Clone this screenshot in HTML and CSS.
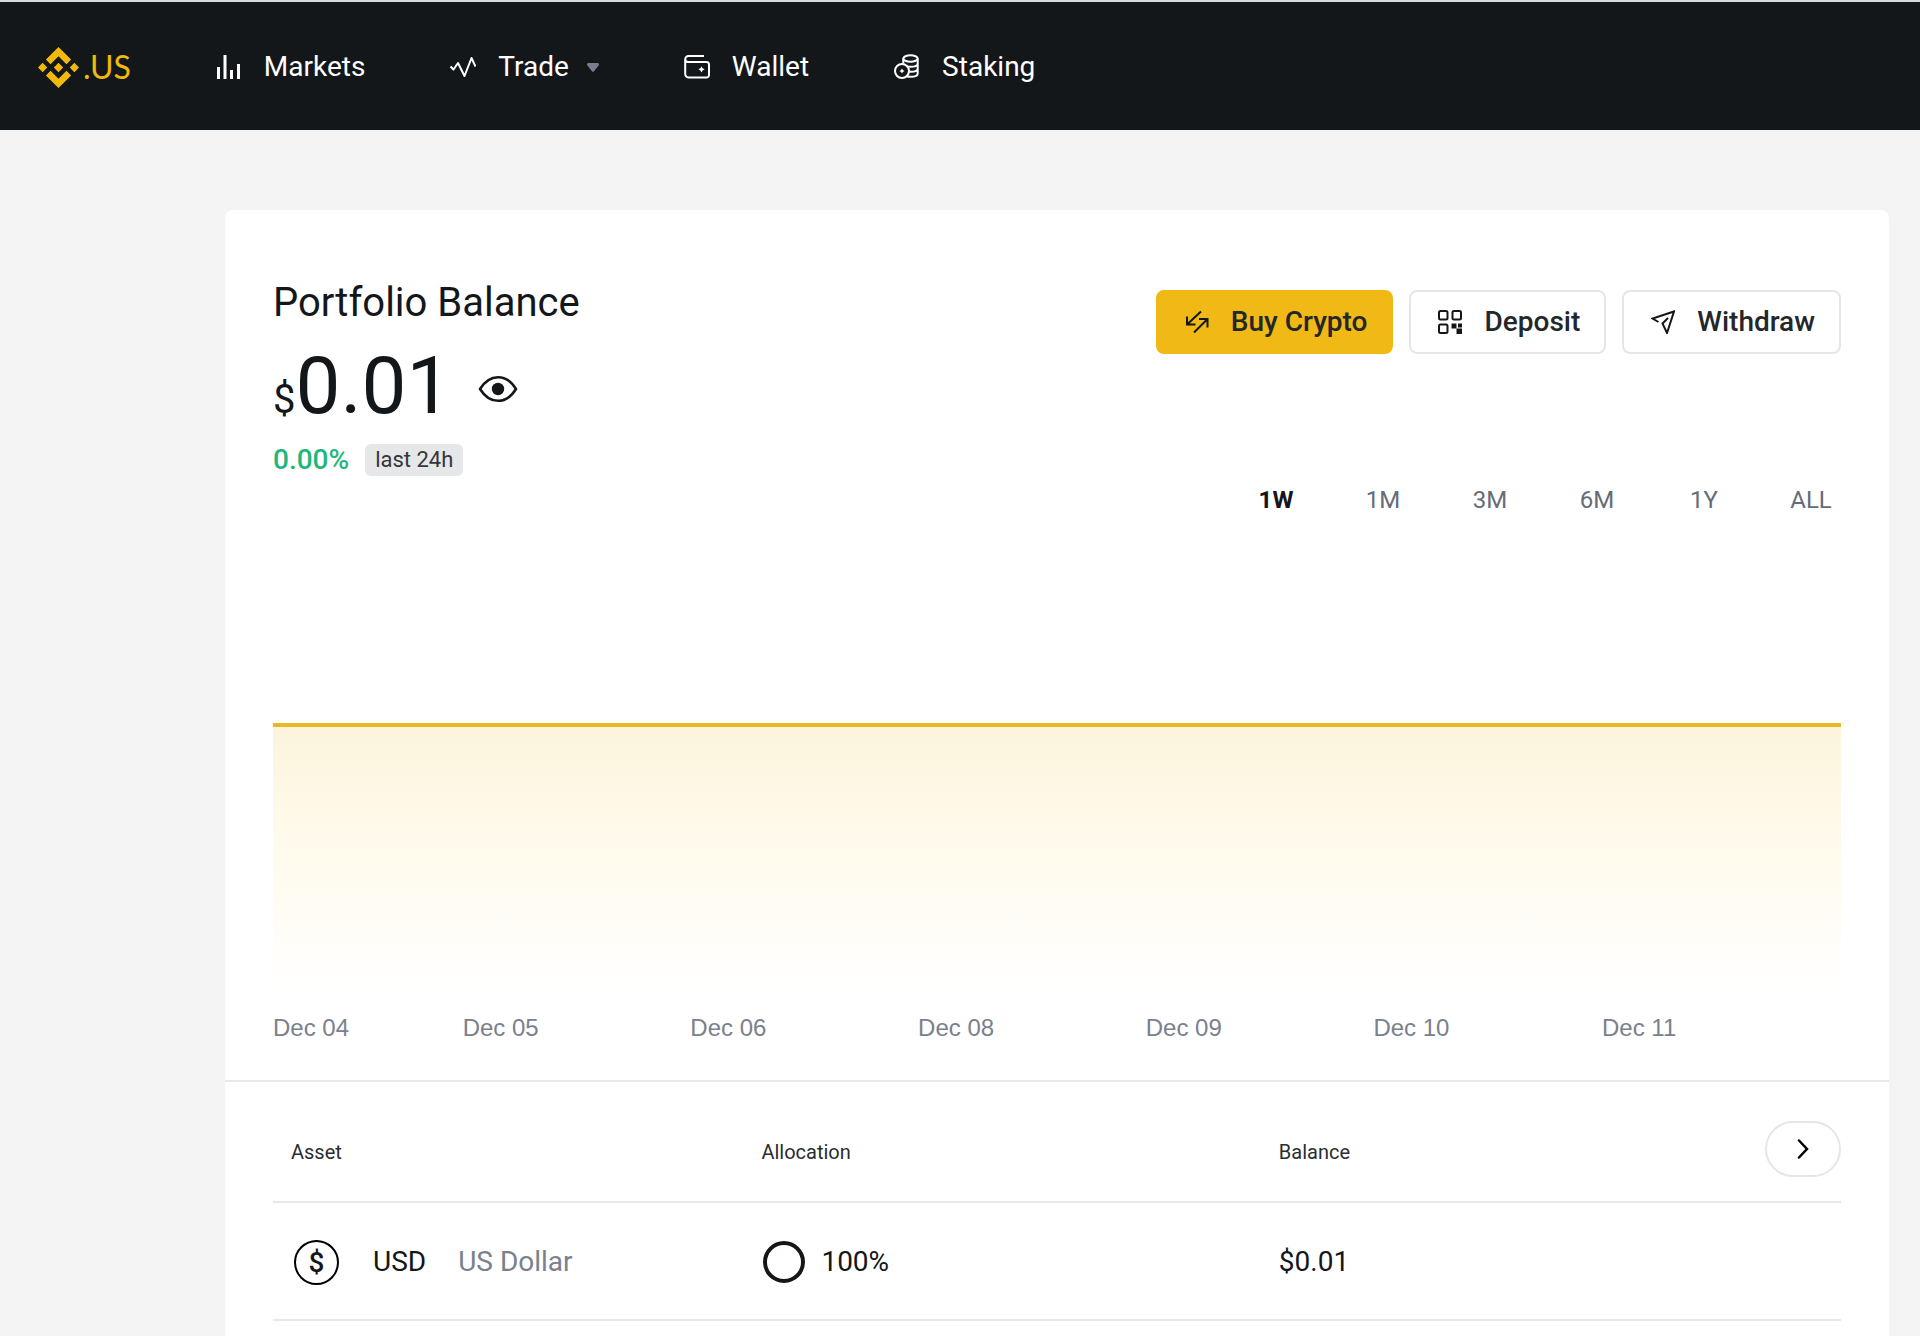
FILE: index.html
```html
<!DOCTYPE html>
<html lang="en">
<head>
  <meta charset="UTF-8" />
  <meta name="viewport" content="width=device-width, initial-scale=1.0" />
  <title>Portfolio</title>
  <link rel="stylesheet" href="styles.css">
</head>
<body>

  <!-- Top navigation -->
  <header class="header">
    <a href="#" class="logo">
      <svg class="logo-mark" viewBox="0 0 126.61 126.61" aria-hidden="true">
        <path d="M38.73 53.2l24.59-24.58 24.6 24.6 14.3-14.31L63.32 0 24.43 38.9zM0 63.31l14.3-14.31 14.31 14.31-14.31 14.3zM38.73 73.41l24.59 24.59 24.6-24.6 14.31 14.29-38.9 38.91-38.91-38.88zM98 63.31l14.3-14.31 14.31 14.3-14.31 14.32zM77.83 63.3L63.32 48.78 48.8 63.3l14.52 14.5z"/>
      </svg>
      <span>.US</span>
    </a>
    <nav class="nav">
      <a href="#" class="nav-link">
        <svg class="nav-icon" viewBox="0 0 26 26" aria-hidden="true">
          <path fill="#fff" d="M1 13h3v12H1zM7.500 1h3v24h-3zM14 16h3v9h-3zM21 10h3v15h-3z"/>
        </svg>
        Markets
      </a>
      <a href="#" class="nav-link">
        <svg class="nav-icon" viewBox="0 0 26 26" aria-hidden="true">
          <path class="line" d="M0.500 12.500L3.500 15.500L8 9L14.500 22L21.500 4L25.500 12.500"/>
        </svg>
        Trade
        <svg class="caret" viewBox="0 0 12 9" aria-hidden="true">
          <path d="M1.500 0h9c1.300 0 1.900 1.500 1.100 2.500L7 8.300c-.5.700-1.500.7-2 0L.4 2.500C-.4 1.500.2 0 1.500 0z"/>
        </svg>
      </a>
      <a href="#" class="nav-link">
        <svg class="nav-icon" viewBox="0 0 26 26" aria-hidden="true">
          <path class="line" d="M20 2H4.500a3.300 3.300 0 0 0-3.300 3.300V20A3.600 3.600 0 0 0 4.800 23.600H22.500a2.500 2.500 0 0 0 2.500-2.500V10.500A2.500 2.500 0 0 0 22.500 8H4.500A3 3 0 0 1 1.200 5.500"/>
          <path fill="#fff" d="M17.500 12.200l1.100 2 2 1.100-2 1.100-1.100 2-1.100-2-2-1.100 2-1.100z"/>
        </svg>
        Wallet
      </a>
      <a href="#" class="nav-link">
        <svg class="nav-icon" viewBox="0 0 26 26" aria-hidden="true">
          <ellipse class="line" cx="16.500" cy="4.500" rx="7.200" ry="3.200"/>
          <path class="line" d="M9.300 4.500V9.500M23.700 4.500V19.500c0 2-3.200 3.300-7.200 3.300-1.500 0-2.800-.2-4-.5M23.700 9.500c0 2-3.200 3.300-7.200 3.300-1.200 0-2.300-.1-3.200-.4M23.700 14.500c0 2-3.200 3.300-7.200 3.300-.7 0-1.300 0-1.900-.1"/>
          <circle class="line" cx="8" cy="17" r="7"/>
          <path fill="#fff" d="M8 14.500l.9 1.600 1.600.9-1.600.9-.9 1.600-.9-1.600-1.600-.9 1.600-.9z"/>
        </svg>
        Staking
      </a>
    </nav>
  </header>

  <main class="card">
    <!-- Portfolio summary -->
    <section class="summary">
      <div class="summary-head">
        <div>
          <h1 class="title">Portfolio Balance</h1>
          <div class="balance">
            <div class="amount"><span class="currency">$</span>0.01</div>
            <button type="button" class="eye-button" aria-label="Hide balance">
              <svg viewBox="0 0 40 28" aria-hidden="true">
                <path d="M2 14C7 6 13 2.200 20 2.200S33 6 38 14C33 22 27 25.800 20 25.800S7 22 2 14z" fill="none" stroke="#14171a" stroke-width="2.600" stroke-linejoin="round"/>
                <circle cx="20" cy="14" r="6.200" fill="#14171a"/>
              </svg>
            </button>
          </div>
          <div class="change">
            <span class="percent">0.00%</span>
            <span class="badge">last 24h</span>
          </div>
        </div>

        <div class="actions">
          <button type="button" class="btn btn-primary">
            <svg class="btn-icon" viewBox="0 0 24 24" aria-hidden="true">
              <path d="M16 1.500L2 14.500M2 6.500v8h8.500M9 22.500L22.500 9M14 9h8.500v8.500"/>
            </svg>
            Buy Crypto
          </button>
          <button type="button" class="btn">
            <svg class="btn-icon" viewBox="0 0 24 24" aria-hidden="true">
              <rect x="1" y="1" width="8.500" height="8.500" rx="1.500"/>
              <rect x="14.500" y="1" width="8.500" height="8.500" rx="1.500"/>
              <rect x="1" y="14.500" width="8.500" height="8.500" rx="1.500"/>
              <path class="solid" d="M13.500 13.500h5v5h-5zM18.500 18.500h5.500v5.500h-5.500zM20 13.500h4v4h-4z"/>
            </svg>
            Deposit
          </button>
          <button type="button" class="btn">
            <svg class="btn-icon" viewBox="0 0 24 24" aria-hidden="true">
              <path d="M7.500 12L1.500 8.500L23 1.500L16 23L11.500 13.500L17 8"/>
            </svg>
            Withdraw
          </button>
        </div>
      </div>

      <div class="ranges">
        <button type="button" class="range active">1W</button>
        <button type="button" class="range">1M</button>
        <button type="button" class="range">3M</button>
        <button type="button" class="range">6M</button>
        <button type="button" class="range">1Y</button>
        <button type="button" class="range">ALL</button>
      </div>

      <!-- Balance chart -->
      <svg class="chart" viewBox="0 0 1568 480" preserveAspectRatio="none" aria-label="Portfolio balance chart">
        <defs>
          <linearGradient id="area" x1="0" y1="0" x2="0" y2="1">
            <stop offset="0" stop-color="#fcf4dc"/>
            <stop offset="0.5" stop-color="#fffbee"/>
            <stop offset="1" stop-color="#ffffff"/>
          </linearGradient>
        </defs>
        <rect x="0" y="209" width="1568" height="271" fill="url(#area)"/>
        <rect x="0" y="207" width="1568" height="4" fill="#e8b923"/>
      </svg>
      <div class="dates">
        <span>Dec 04</span>
        <span>Dec 05</span>
        <span>Dec 06</span>
        <span>Dec 08</span>
        <span>Dec 09</span>
        <span>Dec 10</span>
        <span>Dec 11</span>
      </div>
    </section>

    <!-- Assets -->
    <section class="assets">
      <table class="assets-table">
        <thead>
          <tr>
            <th class="col-asset">Asset</th>
            <th class="col-allocation">Allocation</th>
            <th class="col-balance">Balance</th>
            <th class="col-more">
              <button type="button" class="next-button" aria-label="Next">
                <svg viewBox="0 0 12 20" aria-hidden="true"><path d="M2 1.500L10 10L2 18.500"/></svg>
              </button>
            </th>
          </tr>
        </thead>
        <tbody>
          <tr>
            <td>
              <div class="asset">
                <span class="coin">$</span>
                <span class="symbol">USD</span>
                <span class="name">US Dollar</span>
              </div>
            </td>
            <td>
              <div class="allocation">
                <span class="ring"></span>
                100%
              </div>
            </td>
            <td colspan="2">$0.01</td>
          </tr>
        </tbody>
      </table>
    </section>
  </main>

</body>
</html>
```
FILE: styles.css
```css
* {
  box-sizing: border-box;
}

body {
  margin: 0;
  min-height: 100vh;
  display: flex;
  flex-direction: column;
  font-family: Roboto, "Liberation Sans", sans-serif;
  font-size: 28px;
  line-height: 32px;
  color: #14171a;
  background-color: #f4f4f4;
}

button {
  font: inherit;
  color: inherit;
  padding: 0;
  border: none;
  background: none;
  cursor: pointer;
}

/* Header */
.header {
  display: flex;
  align-items: center;
  gap: 85px;
  height: 130px;
  padding: 2px 38px 0;
  border-top: 2px solid #d5dce0;
  background-color: #14171a;
}

.logo {
  display: flex;
  align-items: center;
  gap: 4px;
  color: #f0b90b;
  font-family: Lato, sans-serif;
  font-size: 32px;
  font-weight: 400;
  text-decoration: none;
}

.logo-mark {
  width: 41px;
  height: 41px;
  fill: #f0b90b;
}

.nav {
  display: flex;
  gap: 85px;
}

.nav-link {
  display: flex;
  align-items: center;
  gap: 22px;
  color: #ffffff;
  text-decoration: none;
}

.nav-icon {
  width: 26px;
  height: 26px;
}

.line {
  fill: none;
  stroke: #ffffff;
  stroke-width: 2;
  stroke-linejoin: round;
}

.caret {
  width: 12px;
  height: 9px;
  margin-left: -4px;
  fill: #777e90;
}

/* Card */
.card {
  flex: 1;
  margin: 80px 31px 0 225px;
  border-radius: 8px 8px 0 0;
  background-color: #ffffff;
}

.summary {
  padding: 69px 48px 38px;
  border-bottom: 2px solid #e8e8e8;
}

.summary-head {
  display: flex;
  justify-content: space-between;
  align-items: flex-start;
}

.title {
  margin: 0;
  font-size: 40px;
  font-weight: 400;
  line-height: 48px;
}

.balance {
  display: flex;
  align-items: center;
  gap: 27px;
  margin: 15px 0 14px;
}

.amount {
  font-size: 80px;
  line-height: 88px;
}

.currency {
  font-size: 40px;
  line-height: 40px;
}

.eye-button {
  display: flex;
  padding-top: 6px;
}

.eye-button svg {
  width: 40px;
  height: 28px;
}

.change {
  display: flex;
  align-items: center;
  gap: 16px;
}

.percent {
  color: #1fb77b;
  font-weight: 500;
}

.badge {
  padding: 0 10px;
  border-radius: 6px;
  font-size: 22px;
  color: #33373b;
  background-color: #e6e7e9;
}

.actions {
  display: flex;
  gap: 16px;
  padding-top: 11px;
}

.btn {
  display: flex;
  align-items: center;
  gap: 22px;
  height: 64px;
  padding: 0 24px 0 27px;
  border: 2px solid #e6e6e6;
  border-radius: 8px;
  font-weight: 500;
  color: #24272a;
}

.btn-primary {
  border-color: #f0b915;
  background-color: #f0b915;
}

.btn-icon {
  width: 24px;
  height: 24px;
  fill: none;
  stroke: #14171a;
  stroke-width: 2;
}

.solid {
  fill: #14171a;
  stroke: none;
}

.ranges {
  display: flex;
  justify-content: flex-end;
  gap: 47px;
  margin-top: 8px;
}

.range {
  width: 60px;
  font-size: 24px;
  color: #666c76;
}

.range.active {
  color: #14171a;
  font-weight: 700;
}

/* Chart */
.chart {
  display: block;
  width: 100%;
  height: 480px;
}

.dates {
  display: grid;
  grid-template-columns: 1fr repeat(6, 2fr);
  margin-top: 18px;
  padding-right: 88px;
  font-family: "Liberation Sans", sans-serif;
  font-size: 24px;
  line-height: 28px;
  text-align: center;
  color: #7a818d;
}

.dates span:first-child {
  text-align: left;
}

/* Assets table */
.assets {
  padding: 14px 48px 0;
}

.assets-table {
  width: 100%;
  border-collapse: collapse;
  table-layout: fixed;
}

.assets-table th,
.assets-table td {
  padding: 0 0 0 18px;
  border-bottom: 2px solid #e8e8e8;
  text-align: left;
}

.assets-table th {
  height: 106px;
  padding-top: 6px;
  font-size: 20px;
  font-weight: 400;
  color: #2a2d31;
}

.assets-table .col-more {
  padding: 0;
}

.assets-table td {
  height: 118px;
  padding-top: 2px;
}

.col-asset {
  width: 30%;
}

.col-allocation {
  width: 33%;
}

.next-button {
  display: flex;
  align-items: center;
  justify-content: center;
  width: 76px;
  height: 56px;
  margin-left: auto;
  border: 2px solid #e6e6e6;
  border-radius: 28px;
}

.next-button svg {
  width: 12px;
  height: 20px;
  fill: none;
  stroke: #000000;
  stroke-width: 2.5;
  stroke-linecap: round;
}

.asset {
  display: flex;
  align-items: center;
  padding-left: 3px;
}

.coin {
  width: 45px;
  height: 45px;
  margin-right: 34px;
  border: 2px solid #000000;
  border-radius: 50%;
  font-weight: 500;
  line-height: 41px;
  text-align: center;
}

.symbol {
  margin-right: 32px;
}

.name {
  color: #7a818d;
}

.allocation {
  display: flex;
  align-items: center;
  gap: 16px;
  padding-left: 2px;
}

.ring {
  width: 42px;
  height: 42px;
  border: 4px solid #14171a;
  border-radius: 50%;
}
```
